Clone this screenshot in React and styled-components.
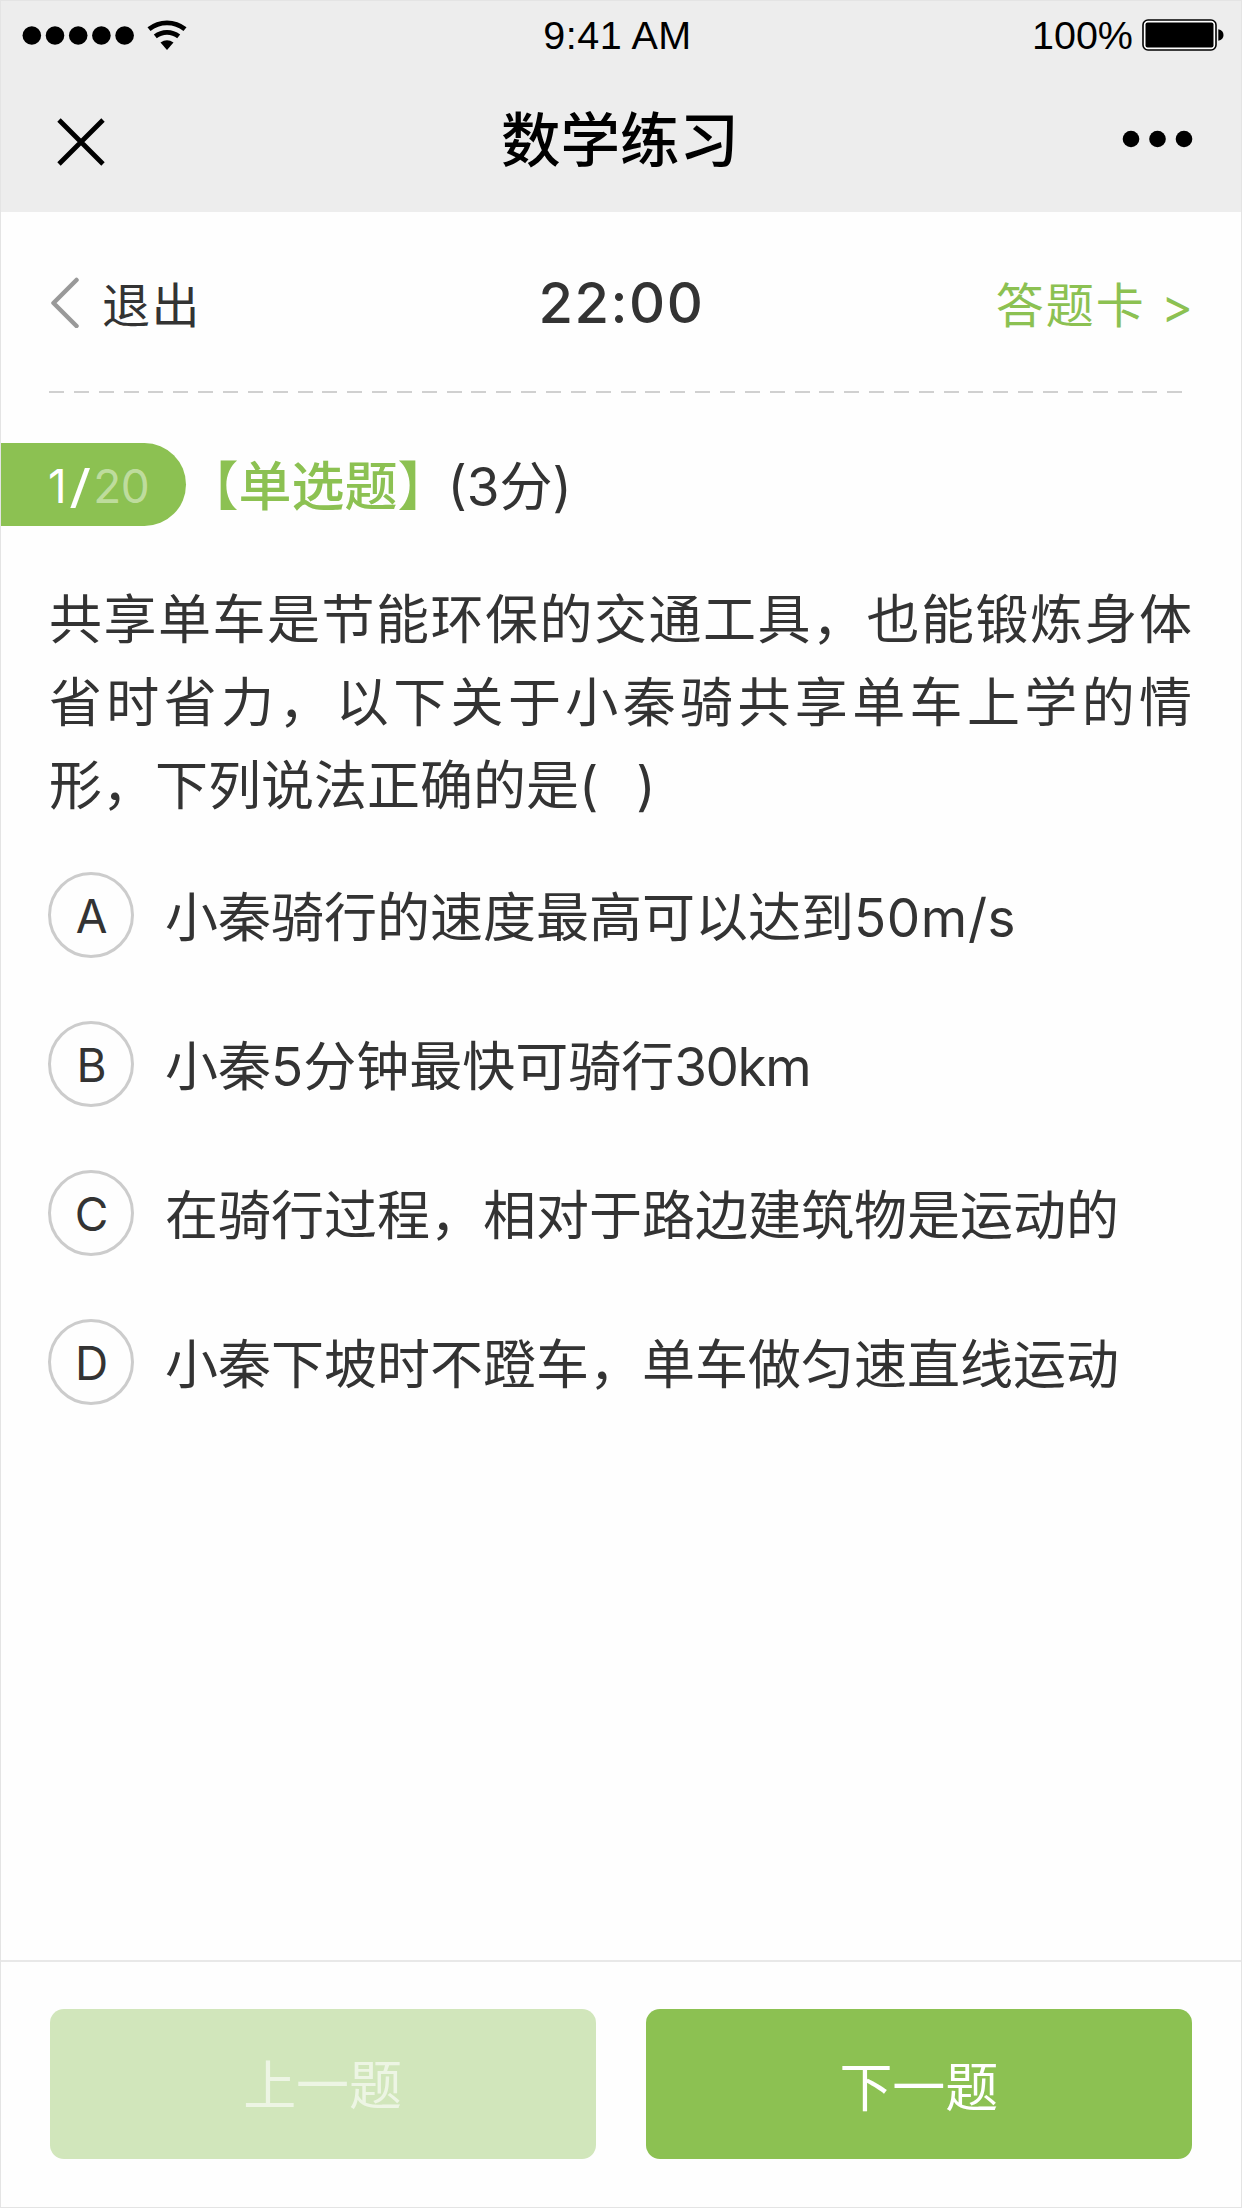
import React from "react";
import styled, { createGlobalStyle } from "styled-components";

const GREEN = "#8cc152";
const INK = "#333333";

const GlobalStyle = createGlobalStyle`
  * { box-sizing: border-box; }
  body { margin: 0; background: #fefefe; }
  button { font: inherit; border: 0; padding: 0; background: none; color: inherit; }
`;

const Screen = styled.div`
  width: 1242px;
  height: 2208px;
  display: flex;
  flex-direction: column;
  border: 1px solid #e4e4e4;
  background: #fefefe;
  color: ${INK};
  font-family: Inter, "Noto Sans CJK SC", sans-serif;
  overflow: hidden;
`;

const Header = styled.header`
  height: 211px;
  flex: none;
  background: #ededed;
  color: #000;
`;

const StatusBar = styled.div`
  height: 68px;
  display: grid;
  grid-template-columns: 1fr auto 1fr;
  align-items: center;
  padding: 0 16px 0 21px;
  font-family: "Liberation Sans", Arial, sans-serif;
  font-size: 39.5px;
  line-height: 68px;
`;

const StatusGroup = styled.div`
  display: flex;
  align-items: center;
  justify-content: ${(p) => (p.$end ? "flex-end" : "flex-start")};
  gap: ${(p) => p.$gap}px;
`;

const Clock = styled.span`
  margin-right: 12px;
  letter-spacing: 0.5px;
`;

const NavBar = styled.div`
  height: 143px;
  display: grid;
  grid-template-columns: 1fr auto 1fr;
  align-items: center;
  padding: 0 48px 0 55px;
`;

const Title = styled.h1`
  margin: 0 9px 0 0;
  font-size: 59.5px;
  font-weight: 500;
  line-height: 143px;
`;

const IconButton = styled.button`
  display: flex;
  justify-self: ${(p) => (p.$end ? "end" : "start")};
  padding-top: ${(p) => (p.$end ? 0 : 2)}px;
  padding-bottom: ${(p) => (p.$end ? 3 : 0)}px;
`;

const ExamBar = styled.div`
  height: 179px;
  flex: none;
  margin: 0 46px 0 48px;
  display: grid;
  grid-template-columns: 1fr auto 1fr;
  align-items: center;
  font-size: 48px;
`;

const ExitButton = styled.button`
  display: flex;
  align-items: center;
  gap: 21px;
  letter-spacing: 1.5px;
`;

const Timer = styled.time`
  padding-top: 2px;
  margin-right: 1px;
  font-size: 56px;
  font-weight: 500;
  letter-spacing: 1.5px;
`;

const AnswerCard = styled.button`
  justify-self: end;
  color: ${GREEN};
  letter-spacing: 2px;
`;

const DashedRule = styled.div`
  height: 2px;
  flex: none;
  width: 1134px;
  margin-left: 48px;
  background: repeating-linear-gradient(90deg, #d0d0d0 0 15px, transparent 15px 24.85px);
`;

const QuestionHead = styled.div`
  display: flex;
  align-items: center;
  height: 83px;
  margin-top: 50px;
  flex: none;
  font-size: 53px;
  line-height: 78px;
`;

const Progress = styled.div`
  width: 184.5px;
  height: 83px;
  padding: 2px 0 0 47px;
  border-radius: 0 42px 42px 0;
  background: ${GREEN};
  color: #fff;
  font-size: 46px;
  line-height: 83px;
`;

const Slash = styled.span`
  display: inline-block;
  margin: 0 5px;
  transform: scaleX(1.35);
`;

const Total = styled.span`
  color: rgba(255, 255, 255, 0.45);
  letter-spacing: -0.5px;
`;

const Kind = styled.span`
  color: ${GREEN};
  font-weight: 500;
  padding-top: 5px;
`;

const Score = styled.span`
  margin-left: -3px;
  padding-top: 5px;
`;

const Question = styled.p`
  margin: 53px 49px 0 48px;
  font-size: 53px;
  line-height: 83px;
  text-align: justify;
  white-space: pre-wrap;
  word-spacing: 4px;
`;

const Options = styled.ul`
  list-style: none;
  margin: 44px 0 0;
  padding: 0 0 0 47px;
  display: flex;
  flex-direction: column;
  gap: 63px;
`;

const Option = styled.li`
  display: flex;
  align-items: center;
  gap: 31px;
  height: 86px;
  font-size: 53px;
`;

const OptionText = styled.span`
  padding-bottom: 3px;
`;

const Amount = styled.span`
  letter-spacing: ${(p) => p.$spacing}px;
`;

const Letter = styled.span`
  width: 86px;
  height: 86px;
  flex: none;
  display: flex;
  align-items: center;
  justify-content: center;
  padding: 2px 0 0 1px;
  border: 3px solid #cccccc;
  border-radius: 50%;
  font-size: 46px;
`;

const Footer = styled.footer`
  margin-top: auto;
  height: 247px;
  flex: none;
  display: flex;
  gap: 50px;
  padding: 47px 49px 0 48.5px;
  border-top: 2px solid #e8e8e8;
`;

const NavButton = styled.button`
  && {
    flex: 1;
    height: 149.5px;
    border-radius: 14px;
    background: ${(p) => (p.$muted ? "#d1e6bb" : GREEN)};
    color: ${(p) => (p.$muted ? "rgba(255, 255, 255, 0.6)" : "#fff")};
    padding-bottom: ${(p) => (p.$muted ? 4 : 0)}px;
    font-size: 53px;
  }
`;

const options = [
  { letter: "A", text: "小秦骑行的速度最高可以达到", amount: "50m/s", spacing: 0.6 },
  { letter: "B", text: "小秦5分钟最快可骑行", amount: "30km", spacing: -1.4 },
  { letter: "C", text: "在骑行过程，相对于路边建筑物是运动的" },
  { letter: "D", text: "小秦下坡时不蹬车，单车做匀速直线运动" },
];

const SignalIcon = () => (
  <svg width="113" height="20" viewBox="0 0 113 20">
    {[0, 1, 2, 3, 4].map((i) => (
      <circle key={i} cx={9.8 + i * 23.2} cy="10.5" r="9.3" />
    ))}
  </svg>
);

const WifiIcon = () => (
  <svg width="40" height="31" viewBox="0 0 40 31">
    <g fill="none" stroke="#000" strokeWidth="4.8">
      <path d="M2 9.2A28.5 28.5 0 0 1 38 9.2" />
      <path d="M8.3 16.4A19 19 0 0 1 31.7 16.4" />
    </g>
    <path d="M13.5 22.6Q20 18 26.5 22.6L20 30Z" />
  </svg>
);

const BatteryIcon = () => (
  <svg width="83" height="32" viewBox="0 0 83 32">
    <rect x="1" y="1" width="73" height="30" rx="5" fill="#fff" stroke="#000" strokeWidth="1.6" />
    <rect x="3.5" y="3.5" width="68" height="25" rx="2" />
    <path d="M76.3 10.2Q81.5 11.2 81.5 16T76.3 21.8Z" />
  </svg>
);

const CloseIcon = () => (
  <svg width="50" height="50" viewBox="0 0 50 50">
    <path d="M3 3L47 47M47 3L3 47" stroke="#000" strokeWidth="4.8" />
  </svg>
);

const MoreIcon = () => (
  <svg width="71" height="18" viewBox="0 0 71 18">
    {[9, 35.5, 62].map((x) => (
      <circle key={x} cx={x} cy="9" r="8.3" />
    ))}
  </svg>
);

const BackIcon = () => (
  <svg width="32" height="52" viewBox="0 0 32 52">
    <path
      d="M27.5 4L4.5 27L27.5 50"
      fill="none"
      stroke="#999"
      strokeWidth="4.5"
      strokeLinecap="round"
      strokeLinejoin="round"
    />
  </svg>
);

export default function App() {
  return (
    <>
      <GlobalStyle />
      <Screen>
        <Header>
          <StatusBar>
            <StatusGroup $gap={12}>
              <SignalIcon />
              <WifiIcon />
            </StatusGroup>
            <Clock>9:41 AM</Clock>
            <StatusGroup $gap={9} $end>
              <span>100%</span>
              <BatteryIcon />
            </StatusGroup>
          </StatusBar>
          <NavBar>
            <IconButton aria-label="关闭">
              <CloseIcon />
            </IconButton>
            <Title>数学练习</Title>
            <IconButton $end aria-label="更多">
              <MoreIcon />
            </IconButton>
          </NavBar>
        </Header>
        <ExamBar>
          <ExitButton>
            <BackIcon />
            退出
          </ExitButton>
          <Timer>22:00</Timer>
          <AnswerCard>答题卡 &gt;</AnswerCard>
        </ExamBar>
        <DashedRule />
        <QuestionHead>
          <Progress>
            1<Slash>/</Slash>
            <Total>20</Total>
          </Progress>
          <Kind>【单选题】</Kind>
          <Score>(3分)</Score>
        </QuestionHead>
        <Question>
          {"共享单车是节能环保的交通工具，也能锻炼身体省时省力，以下关于小秦骑共享单车上学的情形，下列说法正确的是(  )"}
        </Question>
        <Options>
          {options.map(({ letter, text, amount, spacing }) => (
            <Option key={letter}>
              <Letter>{letter}</Letter>
              <OptionText>
                {text}
                {amount && <Amount $spacing={spacing}>{amount}</Amount>}
              </OptionText>
            </Option>
          ))}
        </Options>
        <Footer>
          <NavButton $muted>上一题</NavButton>
          <NavButton>下一题</NavButton>
        </Footer>
      </Screen>
    </>
  );
}
